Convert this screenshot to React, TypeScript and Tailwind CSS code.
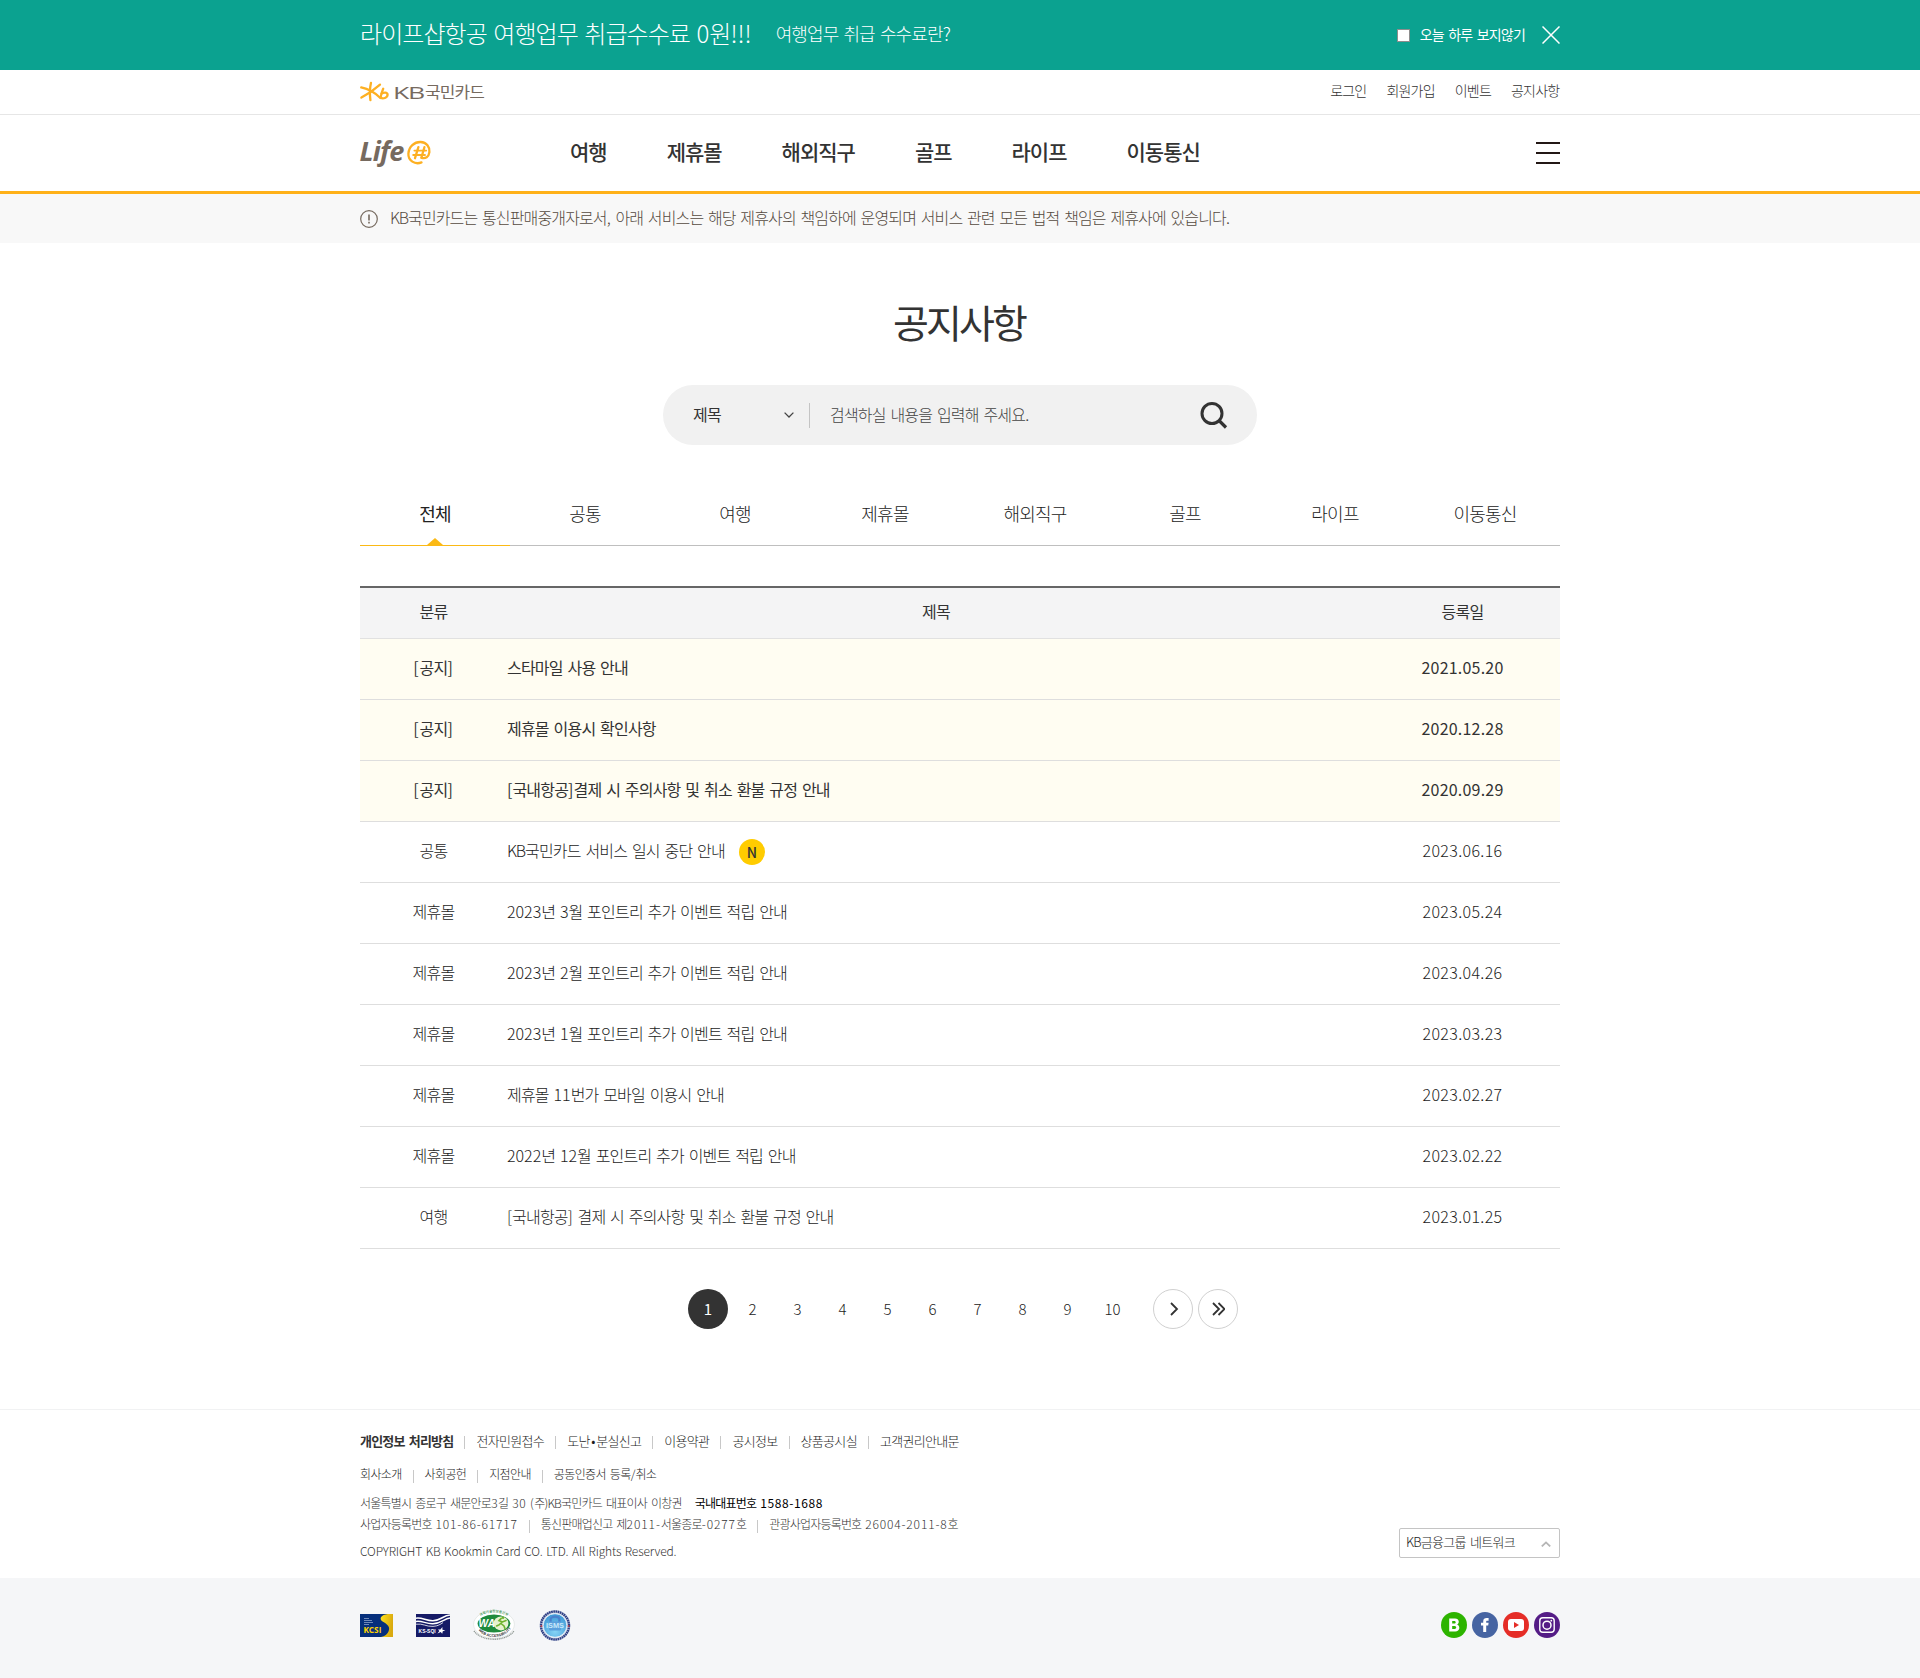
import React from "react";

const NAV = ["여행", "제휴몰", "해외직구", "골프", "라이프", "이동통신"];
const UTIL = ["로그인", "회원가입", "이벤트", "공지사항"];
const TABS = ["전체", "공통", "여행", "제휴몰", "해외직구", "골프", "라이프", "이동통신"];

type Row = { type: string; title: string; date: string; notice?: boolean; isNew?: boolean };

const ROWS: Row[] = [
  { type: "[공지]", title: "스타마일 사용 안내", date: "2021.05.20", notice: true },
  { type: "[공지]", title: "제휴몰 이용시 확인사항", date: "2020.12.28", notice: true },
  { type: "[공지]", title: "[국내항공]결제 시 주의사항 및 취소 환불 규정 안내", date: "2020.09.29", notice: true },
  { type: "공통", title: "KB국민카드 서비스 일시 중단 안내", date: "2023.06.16", isNew: true },
  { type: "제휴몰", title: "2023년 3월 포인트리 추가 이벤트 적립 안내", date: "2023.05.24" },
  { type: "제휴몰", title: "2023년 2월 포인트리 추가 이벤트 적립 안내", date: "2023.04.26" },
  { type: "제휴몰", title: "2023년 1월 포인트리 추가 이벤트 적립 안내", date: "2023.03.23" },
  { type: "제휴몰", title: "제휴몰 11번가 모바일 이용시 안내", date: "2023.02.27" },
  { type: "제휴몰", title: "2022년 12월 포인트리 추가 이벤트 적립 안내", date: "2023.02.22" },
  { type: "여행", title: "[국내항공] 결제 시 주의사항 및 취소 환불 규정 안내", date: "2023.01.25" },
];

const LINKS1 = ["개인정보 처리방침", "전자민원접수", "도난•분실신고", "이용약관", "공시정보", "상품공시실", "고객권리안내문"];
const LINKS2 = ["회사소개", "사회공헌", "지점안내", "공동인증서 등록/취소"];

/* Hangul is set tight; digits and Latin letters get a spacing of their own. */
function Ko({ children, latin = "tracking-normal" }: { children: string; latin?: string }) {
  return (
    <>
      {children.split(/([!-~•]+)/).map((part, i) => {
        if (i % 2 === 0) return part;
        const cls = part === "•" ? "mx-[1.5px]" : part.endsWith("KB") ? "tracking-[-0.07em]" : latin;
        return (
          <span key={i} className={cls}>
            {part}
          </span>
        );
      })}
    </>
  );
}

function Bar() {
  return <span className="mx-[11px] mt-[2px] h-[13px] w-px bg-[#c8c8c8]" />;
}

function KbLogo() {
  return (
    <svg width="126" height="20" viewBox="0 0 126 20" className="block overflow-visible">
      <g fill="none" stroke="#fdb022" strokeWidth="2.3" strokeLinecap="round" strokeLinejoin="round">
        <path d="M11 0.8 C9.8 6 9.6 12 10.4 18.2" />
        <path d="M1.2 5.4 C8 6.8 15 10.6 20.4 16" />
        <path d="M1.4 15.6 C7 12.6 14.6 7.4 20 2.6" />
        <path d="M23.2 6.8 C21.8 10 20.8 12.6 20.6 15.8 C23 17.2 27.4 16 27.6 12.8 C27.4 10 23.6 10.2 21.2 12" />
      </g>
      <text x="33" y="16.8" textLength="31" lengthAdjust="spacingAndGlyphs" fontFamily="Open Sans, Noto Sans, sans-serif" fontSize="17" fill="#766a5f">KB</text>
      <text x="65" y="15.9" textLength="59" lengthAdjust="spacingAndGlyphs" fontFamily="Noto Sans CJK KR, sans-serif" fontSize="15.5" fill="#766a5f">국민카드</text>
    </svg>
  );
}

function LifeLogo() {
  return (
    <svg width="72" height="28" viewBox="0 0 72 28" className="block overflow-visible">
      <text x="-0.5" y="21.6" textLength="44" lengthAdjust="spacingAndGlyphs" fontFamily="Open Sans, sans-serif" fontStyle="italic" fontWeight="700" fontSize="26" fill="#766a5f">Life</text>
      <g fill="none" stroke="#fdb022" strokeWidth="2.3" strokeLinecap="round">
        <path d="M61.5 23.4 C55 26 48 21.6 48.4 14.6 C48.8 7.6 54.4 2.8 60.6 3 C66.6 3.2 70 8.2 69.4 13.2 C68.8 18 65.4 20 61.6 18.8" />
        <path d="M58.4 8.2 L55 19.2" />
        <path d="M64.4 8.2 L61.4 18.6" />
        <path d="M54.4 11.6 H66.2 M53.2 16 H65" strokeWidth="1.9" />
      </g>
    </svg>
  );
}

function Kcsi() {
  return (
    <svg width="33" height="23" viewBox="0 0 33 23">
      <defs>
        <linearGradient id="gold" x1="0" x2="1" y1="0" y2="0.3">
          <stop offset="0" stopColor="#ffe21c" />
          <stop offset="1" stopColor="#d9a910" />
        </linearGradient>
      </defs>
      <rect width="33" height="23" fill="#062f7c" />
      <path d="M33 0 H28 C21 .6 18.6 4.6 22.6 7.6 C27.4 10.4 30.6 13 28.6 17.2 C27.4 20.2 25 22 21 23 H33 Z" fill="url(#gold)" />
      <path d="M4 4.5 H9 M4 6.5 H12 M4 8.5 H13 M4 10.5 H9" stroke="#9fb0d6" strokeWidth="0.7" />
      <text x="3.4" y="19.2" textLength="18" lengthAdjust="spacingAndGlyphs" fontFamily="Open Sans, sans-serif" fontWeight="700" fontSize="8.6" fill="#ffd400">KCSI</text>
    </svg>
  );
}

function KsSqi() {
  return (
    <svg width="34" height="23" viewBox="0 0 34 23">
      <rect width="34" height="23" fill="#151a66" />
      <g fill="none" stroke="#fff" strokeWidth="1.5">
        <path d="M0 4.2 C6 3 10 7 17 6.8 C25 6.4 27 1.6 34 1" />
        <path d="M0 7.4 C6 6.2 10 10.2 17 9.8 C25 9.4 28 4.8 34 4" />
        <path d="M0 10.2 C7 9.2 10 12.8 17 12.4 C22 12 24 10.6 27 8.6" strokeWidth="0.8" />
      </g>
      <text x="2.6" y="19.2" textLength="17" lengthAdjust="spacingAndGlyphs" fontFamily="Liberation Sans, sans-serif" fontWeight="700" fontSize="4.8" fill="#fff">KS-SQI</text>
      <path d="M26.4 13 L26.4 15.8 L29.4 16.2 L26.8 17.2 L26.2 19.8 L24.8 18 L21.4 19.6 L23.4 17 L22 15.4 L24.4 15.4 Z" fill="#fff" />
    </svg>
  );
}

function WebAccess() {
  return (
    <svg width="42" height="32" viewBox="0 0 42 32" className="overflow-visible">
      <defs>
        <path id="wa-top" d="M7 8 C13 1.8 29 1.8 35 8" />
        <path id="wa-low" d="M4.6 20 C11 30.6 31 30.6 37.6 20" />
      </defs>
      <ellipse cx="21" cy="15.4" rx="20.4" ry="13.8" fill="#fff" stroke="#d9dedb" strokeWidth="0.6" />
      <ellipse cx="21" cy="14.6" rx="16.4" ry="9" fill="#1f8b3c" />
      <ellipse cx="28" cy="14.4" rx="7.4" ry="7" fill="#e6f2cf" />
      <path d="M28.2 9.4 L26 11.6 L29.4 13 L33 11.6 M29.2 13 L26.4 15.6 L23.6 17 M28.6 15 L31 17 L32 19.6" stroke="#6fb22c" strokeWidth="1.6" fill="none" strokeLinecap="round" />
      <circle cx="30" cy="8.8" r="1.2" fill="#6fb22c" />
      <text x="5.6" y="18.4" textLength="16.4" lengthAdjust="spacingAndGlyphs" fontFamily="Liberation Sans, sans-serif" fontWeight="700" fontStyle="italic" fontSize="10.5" fill="#fff">WA</text>
      <text fontFamily="Noto Sans CJK KR, sans-serif" fontSize="3.4" letterSpacing="0" wordSpacing="0" fontWeight="500" fill="#2e8b45">
        <textPath href="#wa-top" startOffset="3%">과학기술정보통신부</textPath>
      </text>
      <text fontFamily="Liberation Sans, sans-serif" fontSize="3.7" letterSpacing="0" wordSpacing="0" fontWeight="700" fill="#333">
        <textPath href="#wa-low" startOffset="4%">WEB ACCESSIBILITY</textPath>
      </text>
      <path d="M1 22 C9 33 33 33 41 22" fill="none" stroke="#8d9691" strokeWidth="1.3" strokeDasharray="1.2 0.6" />
    </svg>
  );
}

function Isms() {
  return (
    <svg width="32" height="33" viewBox="0 0 32 33">
      <defs>
        <radialGradient id="isms" cx="0.5" cy="0.75" r="0.7">
          <stop offset="0" stopColor="#86d4f6" />
          <stop offset="1" stopColor="#3f9ad6" />
        </radialGradient>
      </defs>
      <circle cx="16" cy="16.5" r="15.4" fill="#dfe4ee" />
      <circle cx="16" cy="16.5" r="14" fill="none" stroke="#2f3f84" strokeWidth="2.4" strokeDasharray="1.7 0.5" />
      <circle cx="16" cy="16.5" r="11.8" fill="url(#isms)" stroke="#f3f6fb" strokeWidth="0.8" />
      <path d="M11.6 13 V10.4 C11.6 6.8 20.4 6.8 20.4 10.4 V13" fill="none" stroke="#4a80cc" strokeWidth="2.2" />
      <rect x="10" y="12.4" width="12" height="9" rx="1" fill="#5b9fdc" />
      <text x="7" y="19.4" textLength="18" lengthAdjust="spacingAndGlyphs" fontFamily="Liberation Sans, sans-serif" fontWeight="700" fontSize="7" fill="#c9e9fb">ISMS</text>
      <circle cx="2.4" cy="17" r="1" fill="#b9454f" />
      <circle cx="29.6" cy="17" r="1" fill="#b9454f" />
    </svg>
  );
}

function Social() {
  return (
    <div className="flex gap-[5px]">
      <svg width="26" height="26" viewBox="0 0 26 26">
        <circle cx="13" cy="13" r="13" fill="#2db400" />
        <path fillRule="evenodd" fill="#fff" d="M8.2 6.4 H14 C18.6 6.4 18.8 11.6 15.8 12.6 C19.6 13.6 19.2 19.6 14.2 19.6 H8.2 Z M11.2 9 V11.6 H13.2 C15.2 11.6 15.2 9 13.2 9 Z M11.2 14 V17 H13.6 C15.8 17 15.8 14 13.6 14 Z" />
      </svg>
      <svg width="26" height="26" viewBox="0 0 26 26">
        <circle cx="13" cy="13" r="13" fill="#4664a2" />
        <path fill="#fff" d="M11.2 20 V13.6 H9 V10.8 H11.2 V9.4 C11.2 7 12.6 6 14.6 6 H16.6 V8.8 H15.2 C14.4 8.8 14.2 9.2 14.2 9.8 V10.8 H16.6 L16.2 13.6 H14.2 V20 Z" />
      </svg>
      <svg width="26" height="26" viewBox="0 0 26 26">
        <circle cx="13" cy="13" r="13" fill="#e52d27" />
        <rect x="5" y="7" width="16" height="12" rx="3" fill="#fff" />
        <path d="M11 10 L16 13 L11 16 Z" fill="#e52d27" />
      </svg>
      <svg width="26" height="26" viewBox="0 0 26 26">
        <circle cx="13" cy="13" r="13" fill="#541c86" />
        <rect x="5.8" y="5.8" width="14.4" height="14.4" rx="3" fill="none" stroke="#fff" strokeWidth="1.4" />
        <circle cx="13" cy="13.2" r="4" fill="none" stroke="#fff" strokeWidth="1.5" />
        <circle cx="17.3" cy="8.7" r="0.9" fill="#fff" />
      </svg>
    </div>
  );
}

export default function App() {
  return (
    <div className="min-h-[1678px] w-full bg-white font-['Noto_Sans_CJK_KR',sans-serif] text-[16px] leading-none tracking-[-0.8px] text-[#333] [word-spacing:2px]">
      {/* promotion strip */}
      <div className="h-[70px] bg-[#0ba290] text-white">
        <div className="mx-auto flex h-full w-[1200px] items-center">
          <span className="pb-[5px] text-[24px] font-light tracking-[-0.93px]">
            <Ko>라이프샵항공 여행업무 취급수수료 0원!!!</Ko>
          </span>
          <span className="ml-[24px] pb-[4px] text-[18px] font-light tracking-[-0.88px]">
            <Ko>여행업무 취급 수수료란?</Ko>
          </span>
          <span className="ml-auto mr-[10px] h-[13px] w-[13px] border border-[#8d8d8d] bg-white" />
          <span className="pb-[2px] text-[14px]">오늘 하루 보지않기</span>
          <svg width="18" height="18" viewBox="0 0 18 18" className="ml-[17px]">
            <path d="M0.5 0.5 L17.5 17.5 M17.5 0.5 L0.5 17.5" stroke="#fff" strokeWidth="1.5" />
          </svg>
        </div>
      </div>

      <div className="h-[45px] border-b border-[#e6e6e6]">
        <div className="mx-auto flex h-full w-[1200px] items-start justify-between">
          <div className="pt-[12px]">
            <KbLogo />
          </div>
          <div className="mr-[0.7px] flex gap-[20px] pt-[13px] text-[14px] font-light text-[#333]">
            {UTIL.map((t) => (
              <span key={t}>{t}</span>
            ))}
          </div>
        </div>
      </div>

      <div className="h-[79px] border-b-[3px] border-[#ffb119]">
        <div className="mx-auto flex h-full w-[1200px] items-center">
          <div className="w-[210px]">
            <LifeLogo />
          </div>
          <div className="flex gap-[60px] pb-[4px] text-[21px] font-medium tracking-[-1px] text-[#333]">
            {NAV.map((t) => (
              <span key={t}>{t}</span>
            ))}
          </div>
          <div className="ml-auto flex w-[24px] flex-col gap-[8px]">
            <span className="h-[2px] bg-[#231815]" />
            <span className="h-[2px] bg-[#231815]" />
            <span className="h-[2px] bg-[#231815]" />
          </div>
        </div>
      </div>

      <div className="h-[49px] bg-[#f8f8f8]">
        <div className="mx-auto flex h-full w-[1200px] items-center font-light text-[#554a40]">
          <svg width="18" height="18" viewBox="0 0 18 18" className="mr-[12px]">
            <circle cx="9" cy="9" r="8.3" fill="none" stroke="#766a5f" strokeWidth="1.2" />
            <path d="M9 4.6 V10.4 M9 11.8 V13.4" stroke="#766a5f" strokeWidth="1.6" />
          </svg>
          <span className="pb-[4px] tracking-[-0.86px]">
            <Ko>KB국민카드는 통신판매중개자로서, 아래 서비스는 해당 제휴사의 책임하에 운영되며 서비스 관련 모든 법적 책임은 제휴사에 있습니다.</Ko>
          </span>
        </div>
      </div>

      <main className="mx-auto w-[1200px]">
        <h1 className="mt-[59px] h-[40px] pr-[2px] text-center text-[39px] tracking-[-2.9px]">공지사항</h1>

        <div className="mx-auto mt-[43px] flex h-[60px] w-[594px] items-center rounded-full bg-[#f1f1f1] pl-[30px] pr-[29px]">
          <span className="w-[91px] pb-[2px]">제목</span>
          <svg width="10" height="6" viewBox="0 0 10 6">
            <path d="M0.6 0.6 L5 5 L9.4 0.6" fill="none" stroke="#444" strokeWidth="1.3" />
          </svg>
          <span className="ml-[15px] mr-[20px] h-[25px] w-px bg-[#c4c4c4]" />
          <span className="pb-[2px] font-light text-[#444]">
            <Ko>검색하실 내용을 입력해 주세요.</Ko>
          </span>
          <svg width="28" height="28" viewBox="0 0 28 28" className="ml-auto">
            <circle cx="12" cy="12.5" r="10" fill="none" stroke="#333" strokeWidth="3" />
            <path d="M19 19.5 L26 26.5" stroke="#333" strokeWidth="3.2" />
          </svg>
        </div>

        <div className="mt-[37px] grid h-[64px] grid-cols-8 text-center text-[18px] font-light text-[#222]">
          {TABS.map((t, i) => (
            <div
              key={t}
              className={
                i === 0
                  ? "relative border-b border-[#fbb915] pt-[22px] font-normal"
                  : "border-b border-[#bfbfbf] pt-[22px]"
              }
            >
              {t}
              {i === 0 && (
                <svg width="16" height="7" viewBox="0 0 16 7" className="absolute bottom-0 left-[67px]">
                  <path d="M0 7 L8 0 L16 7 Z" fill="#fbb915" />
                </svg>
              )}
            </div>
          ))}
        </div>

        <div className="mt-[40px] border-t-2 border-[#666]">
          <div className="grid h-[51px] grid-cols-[147px_1fr_195px] items-center border-b border-[#e1e1e1] bg-[#f4f4f5] pb-[4px] text-center">
            <span>분류</span>
            <span>제목</span>
            <span>등록일</span>
          </div>
          {ROWS.map((r, i) => (
            <div
              key={i}
              className={
                r.notice
                  ? "grid h-[61px] grid-cols-[147px_1fr_195px] items-center border-b border-[#dedede] bg-[#fffdf2] pb-[4px] font-normal"
                  : "grid h-[61px] grid-cols-[147px_1fr_195px] items-center border-b border-[#dedede] pb-[4px] font-light text-[#1c1c1c]"
              }
            >
              <span className="text-center">
                <Ko latin="tracking-[0.06em]">{r.type}</Ko>
              </span>
              <span className="flex items-center">
                <span>
                  <Ko>{r.title}</Ko>
                </span>
                {r.isNew && (
                  <span className="relative top-[2px] ml-[14px] flex h-[26px] w-[26px] items-center justify-center rounded-full bg-[#fc0] text-[14px] font-medium tracking-normal text-[#333]">
                    N
                  </span>
                )}
              </span>
              <span className={r.notice ? "text-center tracking-[0.2px]" : "text-center tracking-[0.35px]"}>{r.date}</span>
            </div>
          ))}
        </div>

        <div className="ml-[328px] mt-[40px] flex h-[40px] items-center gap-[5px] text-[15px] font-light tracking-normal text-[#222]">
          {Array.from({ length: 10 }, (_, i) => (
            <span
              key={i}
              className={
                i === 0
                  ? "flex h-[40px] w-[40px] items-center justify-center rounded-full bg-[#333] pb-[2px] font-normal text-white"
                  : "flex h-[40px] w-[40px] items-center justify-center pb-[2px] pr-[1px]"
              }
            >
              {i + 1}
            </span>
          ))}
          <span className="ml-[15px] flex h-[40px] w-[40px] items-center justify-center rounded-full border border-[#d0d0d0]">
            <svg width="14" height="14" viewBox="0 0 14 14">
              <path d="M5 1 L11 7 L5 13" fill="none" stroke="#333" strokeWidth="1.8" />
            </svg>
          </span>
          <span className="flex h-[40px] w-[40px] items-center justify-center rounded-full border border-[#d0d0d0]">
            <svg width="14" height="14" viewBox="0 0 14 14">
              <path d="M2 1 L8 7 L2 13 M7.5 1 L13.5 7 L7.5 13" fill="none" stroke="#333" strokeWidth="1.8" />
            </svg>
          </span>
        </div>
      </main>

      <footer className="mt-[80px] border-t border-[#f1f2f3]">
        <div className="mx-auto flex h-[168px] w-[1200px] justify-between">
          <div className="text-[12px] font-light text-[#333]">
            <div className="mt-[24px] flex h-[16px] text-[13px] tracking-[-0.68px] text-[#1c1c1c]">
              {LINKS1.map((t, i) => (
                <React.Fragment key={t}>
                  {i > 0 && <Bar />}
                  <span className={i === 0 ? "font-bold tracking-[-0.8px] text-[#333]" : ""}>
                    <Ko>{t}</Ko>
                  </span>
                </React.Fragment>
              ))}
            </div>
            <div className="mt-[18px] flex h-[16px] tracking-[-0.64px] text-[#1c1c1c]">
              {LINKS2.map((t, i) => (
                <React.Fragment key={t}>
                  {i > 0 && <Bar />}
                  <span>
                    <Ko>{t}</Ko>
                  </span>
                </React.Fragment>
              ))}
            </div>
            <div className="mt-[13px] flex h-[16px]">
              <span className="tracking-[-0.76px]">
                <Ko latin="tracking-[0.04em]">서울특별시 종로구 새문안로3길 30 (주)KB국민카드 대표이사 이창권</Ko>
              </span>
              <span className="ml-[13px] font-normal text-black">
                <Ko latin="tracking-[0.05em]">국내대표번호 1588-1688</Ko>
              </span>
            </div>
            <div className="mt-[5px] flex h-[16px]">
              <span>
                <Ko latin="tracking-[0.07em]">사업자등록번호 101-86-61717</Ko>
              </span>
              <Bar />
              <span>
                <Ko latin="tracking-[0.075em]">통신판매업신고 제2011-서울종로-0277호</Ko>
              </span>
              <Bar />
              <span>
                <Ko latin="tracking-[0.07em]">관광사업자등록번호 26004-2011-8호</Ko>
              </span>
            </div>
            <div className="mt-[11px] h-[16px] tracking-[-0.13px] [word-spacing:1px]">
              COPYRIGHT KB Kookmin Card CO. LTD. All Rights Reserved.
            </div>
          </div>
          <div className="mt-[118px] flex h-[30px] w-[161px] items-center justify-between rounded-[2px] border border-[#c4c4c4] pl-[6px] pr-[8px] text-[13px] font-light tracking-[-0.68px] text-[#1c1c1c]">
            <span className="pb-[3px]">
              <Ko>KB금융그룹 네트워크</Ko>
            </span>
            <svg width="10" height="6" viewBox="0 0 10 6" className="mt-[2px]">
              <path d="M0.8 5.4 L5 1.4 L9.2 5.4" fill="none" stroke="#b5b5b5" strokeWidth="1.8" />
            </svg>
          </div>
        </div>
        <div className="h-[100px] bg-[#f5f6f8]">
          <div className="mx-auto flex h-[94px] w-[1200px] items-center justify-between">
            <div className="flex items-center tracking-normal">
              <Kcsi />
              <span className="w-[23px]" />
              <KsSqi />
              <span className="w-[23px]" />
              <WebAccess />
              <span className="w-[24px]" />
              <Isms />
            </div>
            <Social />
          </div>
        </div>
      </footer>
    </div>
  );
}
